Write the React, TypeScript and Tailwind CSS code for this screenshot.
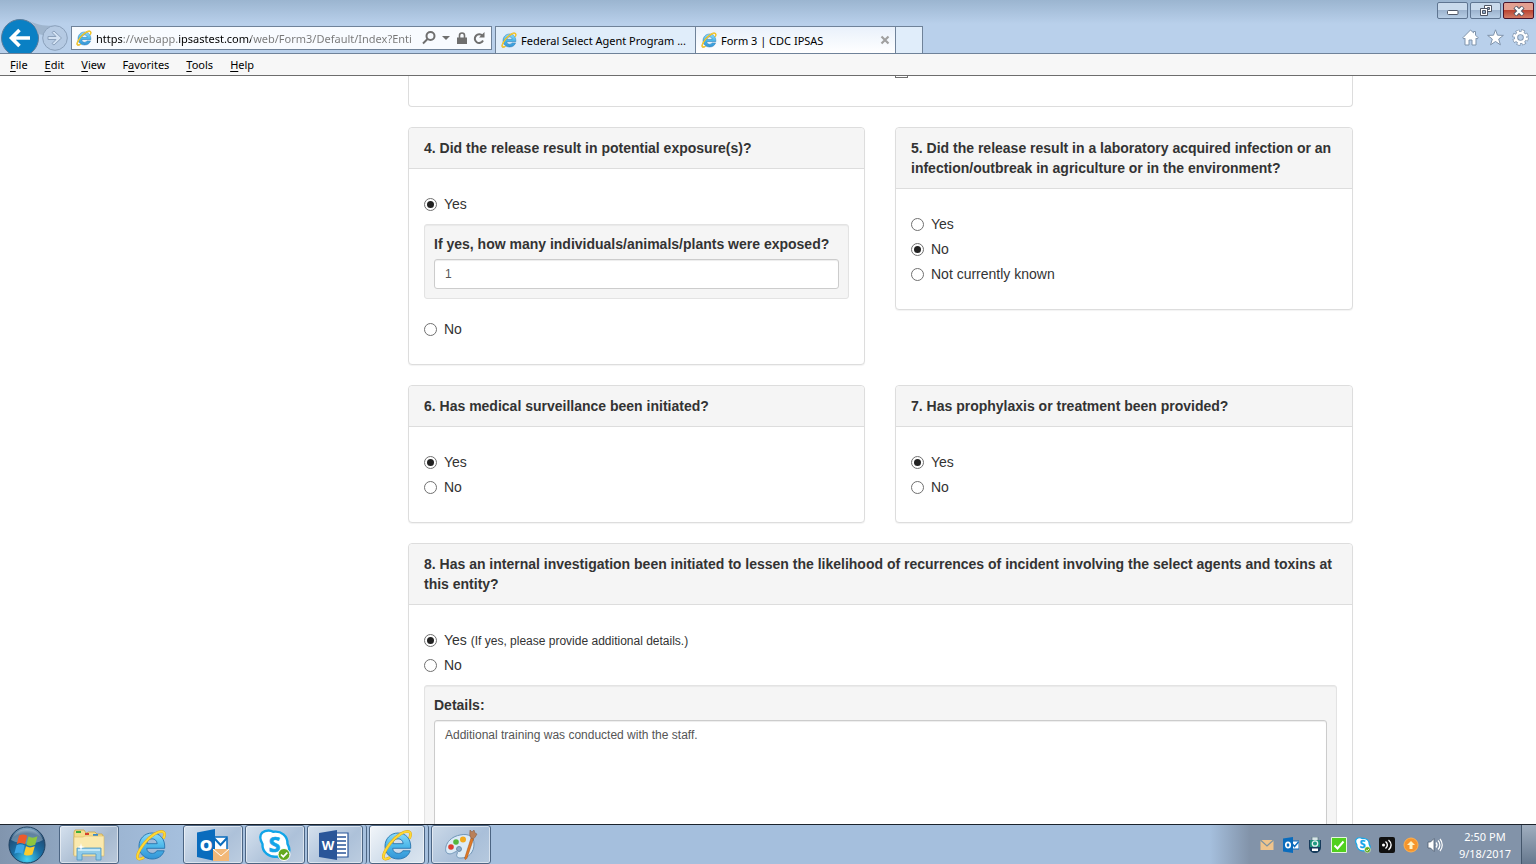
import React, { useId } from 'react';

interface IconProps {
  className?: string;
}

interface RadioProps {
  name: string;
  label: string;
  note?: string;
  checked?: boolean;
}

interface PanelProps {
  title: string;
  children: React.ReactNode;
}

const IeIcon: React.FC<IconProps> = ({ className }) => {
  const id = useId();
  return (
    <svg viewBox="0 0 32 32" className={className} fill="none" aria-hidden="true">
      <defs>
        <linearGradient id={id} x1="0" y1="0" x2="0" y2="1">
          <stop offset="0" stopColor="#8ddcf9" />
          <stop offset="0.5" stopColor="#4db8ea" />
          <stop offset="1" stopColor="#3494d6" />
        </linearGradient>
      </defs>
      <path d="M17 4C9.500 4 4 9.800 4 17.200 4 24.800 9.700 30 17.200 30c5.800 0 10.200-3 12-8.200h-7.400c-.9 1.700-2.400 2.600-4.500 2.600-3.300 0-5.400-2-5.600-5.100h18C30.300 10.300 25.200 4 17 4zm-5.200 10.700c.5-3 2.500-4.900 5.300-4.900s4.800 1.900 5.100 4.900z" fill={`url(#${id})`} stroke="#2673ad" strokeWidth="0.900" />
      <path d="M28.500 9.500c1.400-3.400 1.500-5.900-.4-6.700-4-1.700-12.900 3.900-18.900 11.500C3.200 22.200.9 28.300 3.300 29.800c1.200.7 3.300.1 5.700-1.300" stroke="#dba41c" strokeWidth="2.800" />
      <path d="M28.500 9.500c1.400-3.400 1.500-5.900-.4-6.700-4-1.700-12.900 3.900-18.900 11.500C3.200 22.200.9 28.300 3.300 29.800c1.200.7 3.300.1 5.700-1.300" stroke="#fdd835" strokeWidth="2" />
    </svg>
  );
};

const OutlookIcon: React.FC<IconProps> = ({ className }) => (
  <svg viewBox="0 0 32 32" className={className} aria-hidden="true">
    <path d="M16 8h14v13H16z" fill="#fff" stroke="#0a6cbd" strokeWidth="1.500" />
    <path d="M17 9l6.500 7L30 9" fill="none" stroke="#0a6cbd" strokeWidth="2" />
    <path d="M0 3.500L18 0v32L0 28z" fill="#0a6cbd" />
    <text x="9" y="21.500" textAnchor="middle" fontFamily="Open Sans, sans-serif" fontWeight="800" fontSize="16" fill="#fff">O</text>
  </svg>
);

const SkypeIcon: React.FC<IconProps> = ({ className }) => (
  <svg viewBox="0 0 32 32" className={`overflow-visible ${className}`} aria-hidden="true">
    <path d="M9.500 1.500c2 0 3.400.5 4.600 1.300 8-1.300 14.700 4 14.400 12 2.600 4.600 2.500 8.600-.3 11.500-2.700 2.800-6.800 3-9.900 1.300C9.700 28.800 3 22.900 3.500 15 .8 10.400.6 6.300 3.200 3.700c1.700-1.600 4-2.200 6.300-2.200z" fill="#fff" stroke="#12a5e8" strokeWidth="2.400" />
    <text x="15.500" y="22.500" textAnchor="middle" fontFamily="Open Sans, sans-serif" fontWeight="700" fontSize="21" fill="#12a5e8" stroke="#12a5e8" strokeWidth="0.700">S</text>
    <circle cx="25" cy="25.500" r="6" fill="#63a920" stroke="#fff" strokeWidth="1" />
    <path d="M22 25.500l2.300 2.200 4-4" fill="none" stroke="#fff" strokeWidth="1.700" />
  </svg>
);

const ExplorerIcon = () => (
  <svg viewBox="0 0 34 32" className="h-8 w-[34px]" aria-hidden="true">
    <path d="M2 3l1-2h9l2 3h1l1-1h7l2 2h5l1 2v19H2z" fill="#f5dc8c" stroke="#c9a54a" strokeWidth="0.800" />
    <path d="M4 2h5v2H4z" fill="#3fae3a" />
    <path d="M13 4h4v2h-4z" fill="#d8412c" />
    <path d="M21 5h5v2h-5z" fill="#3688cc" />
    <path d="M2 8h9l2-1h19v20H2z" fill="#fae9ae" stroke="#d9b963" strokeWidth="0.600" />
    <path d="M5 19h24v12h-5v-6H10v6H5z" fill="#8fcbe9" stroke="#4b94bf" strokeWidth="0.800" />
    <path d="M6 20h22v2H6z" fill="#c3e7f7" />
    <path d="M9 14l.8 3.200 3.200.8-3.200.8L9 22l-.8-3.200L5 18l3.200-.8z" fill="#fff" />
  </svg>
);

const WordIcon = () => (
  <svg viewBox="0 0 32 32" className="h-8 w-8" aria-hidden="true">
    <path d="M17 4h12v24H17z" fill="#fff" stroke="#2a5699" strokeWidth="1.200" />
    <path d="M18 8h9M18 12h9M18 16h9M18 20h9M18 24h9" stroke="#2a5699" strokeWidth="1.500" />
    <path d="M0 4l18-3v30L0 28z" fill="#2a5699" />
    <text x="9" y="21" textAnchor="middle" fontFamily="Open Sans, sans-serif" fontWeight="700" fontSize="13" fill="#fff">W</text>
  </svg>
);

const PaintIcon = () => (
  <svg viewBox="0 0 34 32" className="h-8 w-[34px]" aria-hidden="true">
    <path d="M16 6c9-2 14 2 14 9 0 8-5 14-13 14-4 0-5-2-4-4s0-3-2-2-5 3-8 1C0 22 1 9 16 6z" fill="#dcebf7" stroke="#7196b8" strokeWidth="1" />
    <circle cx="7" cy="18" r="2.800" fill="#dd3d30" />
    <circle cx="12" cy="13" r="2.800" fill="#55b73c" />
    <circle cx="19" cy="10.500" r="3" fill="#f1a91d" />
    <circle cx="15" cy="20" r="2.500" fill="#8dabc8" stroke="#5e7f9f" strokeWidth="0.800" />
    <path d="M27 9l2.500 1-6.500 19c-1 2-3 2-2-1z" fill="#e07a26" stroke="#a34e12" strokeWidth="0.500" />
    <path d="M27 9c-2-3-1-5-1-8l2 2 2-2 1 3 2 1c-1 2-3 5-4 5z" fill="#b9805a" stroke="#84563a" strokeWidth="0.500" />
  </svg>
);

const StartOrb = () => (
  <svg viewBox="0 0 40 38" className="h-[38px] w-10" aria-hidden="true">
    <defs>
      <radialGradient id="orb" cx="0.5" cy="0.9" r="0.9">
        <stop offset="0" stopColor="#45d3f2" />
        <stop offset="0.450" stopColor="#1a6fa5" />
        <stop offset="0.800" stopColor="#1f4b74" />
        <stop offset="1" stopColor="#8db3d0" />
      </radialGradient>
    </defs>
    <circle cx="20" cy="19" r="18" fill="url(#orb)" stroke="#1d3f5f" strokeWidth="1" />
    <path d="M4 14C7 6 14 3 20 3s13 3 16 11c-9 5-22 5-32 0z" fill="#fff" opacity="0.300" />
    <path d="M12 9.500c3-1.500 5.500-1.500 8.200.2l-2.200 8.500c-2.700-1.700-5.400-1.600-8.200-.3z" fill="#ec5b2c" />
    <path d="M21.500 10.500c2.800 1.600 5.600 1.500 9-.2l-2.300 8.500c-3 1.500-5.900 1.600-8.800 0z" fill="#8ec63f" />
    <path d="M9.500 19.300c3-1.400 5.500-1.300 8.200.3l-2.200 8.300c-2.700-1.700-5.200-1.600-8.200-.2z" fill="#3ca5e6" />
    <path d="M19 20.300c2.700 1.600 5.500 1.400 8.800 0l-2.400 8.200c-3 1.500-5.800 1.400-8.500-.1z" fill="#fccb2e" />
  </svg>
);

const Header = () => (
  <header className="flex h-[54px] shrink-0 border-b border-[#6f8299] bg-[linear-gradient(#9bb5d0,#b9d0eb_24px)]">
    <div className="flex items-end gap-[2px]">
      <button aria-label="Back">
        <svg viewBox="0 0 40 34" className="block h-[34px] w-10">
          <circle cx="20" cy="19" r="18.500" fill="#0a80c4" stroke="#5d7c9a" />
          <path d="M30 19H12M19.500 11l-8 8 8 8" fill="none" stroke="#fff" strokeWidth="3.600" />
        </svg>
      </button>
      <button aria-label="Forward">
        <svg viewBox="0 0 26 34" className="block h-[34px] w-[26px] overflow-visible" fill="none">
          <path d="M-12 2C-5 6 3 7 13 6.700 6 7 2 12 1 16l-5-1C-5 10-8 5-12 2z" fill="#9fb5cd" />
          <circle cx="13" cy="19" r="12.300" stroke="#8ba1bb" fill="#b5cae3" />
          <path d="M6 17.500h8l-4-4 2-1.500 7.500 7-7.500 7-2-1.500 4-4H6z" fill="#d3e2f3" stroke="#8ba1bb" />
        </svg>
      </button>
    </div>

    <div className="ml-[3px] mt-[26px] flex h-6 w-[421px] items-center border border-[#6f8299] bg-[#f8fbff] pl-1 pr-[6px]">
      <IeIcon className="size-4" />
      <input
        aria-label="Address"
        readOnly
        value="https://webapp.ipsastest.com/web/Form3/Default/Index?Enti"
        className="ml-1 min-w-0 flex-1 bg-[linear-gradient(90deg,#000_27px,#777_27px_83px,#000_83px_155px,#777_155px)] bg-clip-text pt-[2px] text-[11px] text-transparent outline-none"
      />
      <div className="flex items-center gap-[6px] text-[#6f6f6f]">
        <button aria-label="Search">
          <svg viewBox="0 0 14 14" className="size-[14px]" fill="none" stroke="currentColor" strokeWidth="2">
            <circle cx="8.500" cy="5" r="4" />
            <path d="M5.500 8L1 12.500" />
          </svg>
        </button>
        <button aria-label="Show address list">
          <svg viewBox="0 0 8 4" className="h-1 w-2" fill="currentColor"><path d="M0 0h8L4 4z" /></svg>
        </button>
        <svg viewBox="0 0 10 13" className="ml-px h-[13px] w-[10px]" aria-hidden="true">
          <path d="M0 5.500h10V12H0z" fill="currentColor" />
          <path d="M2.500 6V3.500a2.500 2.500 0 0 1 5 0V6" fill="none" stroke="currentColor" strokeWidth="1.600" />
        </svg>
        <button aria-label="Refresh">
          <svg viewBox="0 0 12 13" className="h-[13px] w-3" fill="none">
            <path d="M9.500 4A4.300 4.300 0 1 0 10 8.500" stroke="currentColor" strokeWidth="2" />
            <path d="M11.500 0v5.500H6z" fill="currentColor" />
          </svg>
        </button>
      </div>
    </div>

    <nav className="ml-[3px] mt-[26px] flex border-x border-t border-[#6f8299] text-[11px] text-black" aria-label="Tabs">
      <button className="flex w-[199px] items-center gap-1 bg-[#e0edfa] pl-[5px]">
        <IeIcon className="size-4 shrink-0" />
        <span className="whitespace-nowrap pt-[2px]">Federal Select Agent Program ...</span>
      </button>
      <div className="flex w-[201px] items-center gap-1 border-x border-[#6f8299] bg-[linear-gradient(#e9f1fb,#fff)] px-[5px]">
        <IeIcon className="size-4 shrink-0" />
        <span className="flex-1 pt-[2px]">Form 3 | CDC IPSAS</span>
        <button aria-label="Close tab">
          <svg viewBox="0 0 10 10" className="size-[10px]" stroke="#a0a0a0" strokeWidth="2.200"><path d="M1.500 1.500l7 7M8.500 1.500l-7 7" /></svg>
        </button>
      </div>
      <button aria-label="New tab" className="w-[26px] bg-[#e0edfa]" />
    </nav>

    <div className="ml-auto flex flex-col items-end justify-between pb-[7px] pt-[2px]">
      <div className="flex gap-[2px] pr-[2px]">
        <button aria-label="Minimize" className="flex h-[17px] w-[31px] items-center justify-center rounded-[2px] border border-[#5f7591] bg-[linear-gradient(#c9daec_50%,#9db4cf_50%,#b7cde5)]">
          <svg viewBox="0 0 12 6" className="mt-1 h-[6px] w-3"><rect x="0.500" y="0.500" width="10.500" height="4" rx="1" fill="#fff" stroke="#4f5666" /></svg>
        </button>
        <button aria-label="Restore" className="flex h-[17px] w-[31px] items-center justify-center rounded-[2px] border border-[#5f7591] bg-[linear-gradient(#c9daec_50%,#9db4cf_50%,#b7cde5)]">
          <svg viewBox="0 0 12 11" className="h-[11px] w-3" stroke="#4f5666">
            <path d="M4.500.5h7v6h-7z" fill="#fff" />
            <path d="M7.500 2.500h2v2h-2z" fill="#8fa8c3" />
            <path d="M.5 3.500h7v7h-7z" fill="#fff" />
            <path d="M2.500 5.500h3v3h-3z" fill="#8fa8c3" />
          </svg>
        </button>
        <button aria-label="Close" className="flex h-[17px] w-[31px] items-center justify-center rounded-[2px] border border-[#48142a] bg-[linear-gradient(#e3a091_50%,#bb4431_50%,#d27a65)]">
          <svg viewBox="0 0 12 10" className="h-[10px] w-3">
            <path d="M2 1l8 8M10 1L2 9" stroke="#4f5666" strokeWidth="4.400" />
            <path d="M2.400 1.400l7.200 7.200M9.600 1.400L2.400 8.600" stroke="#fff" strokeWidth="2.400" />
          </svg>
        </button>
      </div>
      <div className="flex gap-2 pr-[7px]">
        <button aria-label="Home">
          <svg viewBox="0 0 17 17" className="size-[17px]" fill="#fff" stroke="#7f93ab">
            <path d="M8.500 1L.8 8.800l1 1.200 1.200-.8V16h4v-5h3v5h4V9.200l1.200.8 1-1.200-2.700-2.700V2.500h-2v1.300z" />
          </svg>
        </button>
        <button aria-label="Favorites">
          <svg viewBox="0 0 17 17" className="size-[17px]" fill="#fff" stroke="#7f93ab">
            <path d="M8.500.8l2 5.400 5.900.2-4.700 3.600 1.700 5.800-4.900-3.300-4.900 3.300L5.300 10 .6 6.400l5.900-.2z" />
          </svg>
        </button>
        <button aria-label="Tools">
          <svg viewBox="0 0 17 17" className="size-[17px]" fill="none">
            <circle cx="8.500" cy="8.500" r="6" stroke="#7f93ab" strokeWidth="4.400" strokeDasharray="3.300 1.412" strokeDashoffset="0.200" />
            <circle cx="8.500" cy="8.500" r="4.400" stroke="#7f93ab" strokeWidth="4" />
            <circle cx="8.500" cy="8.500" r="6" stroke="#fff" strokeWidth="3" strokeDasharray="2.300 2.412" strokeDashoffset="-0.300" />
            <circle cx="8.500" cy="8.500" r="4.500" stroke="#fff" strokeWidth="2.400" />
          </svg>
        </button>
      </div>
    </div>
  </header>
);

const menus = [
  { before: '', key: 'F', after: 'ile' },
  { before: '', key: 'E', after: 'dit' },
  { before: '', key: 'V', after: 'iew' },
  { before: 'F', key: 'a', after: 'vorites' },
  { before: '', key: 'T', after: 'ools' },
  { before: '', key: 'H', after: 'elp' },
];

const MenuBar = () => (
  <nav className="flex h-[22px] shrink-0 items-center gap-[17px] border-b border-[#6d6d6d] bg-[#f7f7f7] pl-[10px] pt-[2px] text-[11px] text-black">
    {menus.map(m => (
      <button key={m.key}>{m.before}<span className="underline underline-offset-2">{m.key}</span>{m.after}</button>
    ))}
  </nav>
);

const Radio: React.FC<RadioProps> = ({ name, label, note, checked }) => (
  <label className="flex h-5 items-center gap-[7px]">
    <input
      type="radio"
      name={name}
      defaultChecked={checked}
      className="grid size-[13px] appearance-none place-content-center rounded-full border border-[#707070] bg-white before:size-[7px] before:rounded-full checked:before:bg-[#222]"
    />
    <span>{label}{note && <> <span className="text-xs">{note}</span></>}</span>
  </label>
);

const Panel: React.FC<PanelProps> = ({ title, children }) => (
  <section className="rounded border border-[#ddd] bg-white shadow-[0_1px_1px_rgba(0,0,0,0.05)]">
    <h3 className="rounded-t border-b border-[#ddd] bg-[#f5f5f5] px-[15px] py-[10px] font-bold">{title}</h3>
    <div className="px-[15px] py-[25px]">{children}</div>
  </section>
);

const Form = () => (
  <main className="min-h-0 flex-1 overflow-hidden bg-white font-['Liberation_Sans',Arial,sans-serif] text-sm leading-5 text-[#333]">
    <div className="mx-auto max-w-[1170px] pl-[225px]">
      <div className="mb-5 grid h-[31px] grid-cols-[456fr_457fr] gap-[30px] overflow-hidden rounded-b border-x border-b border-[#ddd]">
        <input type="checkbox" aria-label="Other" className="col-start-2 -mt-[11px] size-[13px] appearance-none border border-[#707070]" />
      </div>

      <div className="mb-5 grid grid-cols-[457fr_458fr] items-start gap-x-[30px] gap-y-5">
        <Panel title="4. Did the release result in potential exposure(s)?">
          <Radio name="exposure" label="Yes" checked />
          <div className="mb-5 mt-[10px] rounded-[3px] border border-[#e3e3e3] bg-[#f5f5f5] p-[9px] shadow-[inset_0_1px_1px_rgba(0,0,0,0.05)]">
            <label htmlFor="exposed" className="mb-[5px] block font-bold">If yes, how many individuals/animals/plants were exposed?</label>
            <input id="exposed" defaultValue="1" className="block h-[30px] w-full rounded-[3px] border border-[#ccc] bg-white px-[10px] text-xs text-[#555] shadow-[inset_0_1px_1px_rgba(0,0,0,0.075)]" />
          </div>
          <Radio name="exposure" label="No" />
        </Panel>
        <Panel title="5. Did the release result in a laboratory acquired infection or an infection/outbreak in agriculture or in the environment?">
          <div className="flex flex-col gap-[5px]">
            <Radio name="infection" label="Yes" />
            <Radio name="infection" label="No" checked />
            <Radio name="infection" label="Not currently known" />
          </div>
        </Panel>
        <Panel title="6. Has medical surveillance been initiated?">
          <div className="flex flex-col gap-[5px]">
            <Radio name="surveillance" label="Yes" checked />
            <Radio name="surveillance" label="No" />
          </div>
        </Panel>
        <Panel title="7. Has prophylaxis or treatment been provided?">
          <div className="flex flex-col gap-[5px]">
            <Radio name="treatment" label="Yes" checked />
            <Radio name="treatment" label="No" />
          </div>
        </Panel>
      </div>

      <Panel title="8. Has an internal investigation been initiated to lessen the likelihood of recurrences of incident involving the select agents and toxins at this entity?">
        <div className="flex flex-col gap-[5px]">
          <Radio name="investigation" label="Yes" note="(If yes, please provide additional details.)" checked />
          <Radio name="investigation" label="No" />
        </div>
        <div className="mt-[10px] rounded-[3px] border border-[#e3e3e3] bg-[#f5f5f5] p-[9px] shadow-[inset_0_1px_1px_rgba(0,0,0,0.05)]">
          <label htmlFor="details" className="mb-[5px] block font-bold">Details:</label>
          <textarea
            id="details"
            rows={8}
            defaultValue="Additional training was conducted with the staff."
            className="block w-full resize-none rounded-[3px] border border-[#ccc] bg-white px-[10px] py-[5px] text-xs leading-[18px] text-[#555] shadow-[inset_0_1px_1px_rgba(0,0,0,0.075)]"
          />
        </div>
      </Panel>
    </div>
  </main>
);

const taskButton = 'flex h-[39px] items-center justify-center rounded-[3px] border border-[#4c6583] shadow-[inset_0_0_0_1px_rgba(255,255,255,0.5)]';

const Taskbar = () => (
  <footer className="flex h-10 shrink-0 justify-between border-t border-[#1c232c] bg-[linear-gradient(90deg,#8195ae,#9db6d3_120px,#a5bfdd_180px,#a5bfdd_1210px,#8293a9_1250px)]">
    <div className="flex">
      <button aria-label="Start" className="mr-[6px] flex w-[53px] items-center justify-center"><StartOrb /></button>
      <div className="flex gap-[2px]">
        <button aria-label="File Explorer" className={`${taskButton} w-15 bg-[linear-gradient(135deg,#d5e1ee,#a6b9cf_60%,#b9c9db)]`}><ExplorerIcon /></button>
        <button aria-label="Internet Explorer" className="flex w-15 items-center justify-center"><IeIcon className="size-8" /></button>
        <button aria-label="Outlook" className={`${taskButton} w-15 bg-[linear-gradient(135deg,#d5e1ee,#adc1d9_60%,#bccde0)]`}>
          <span className="relative">
            <OutlookIcon className="size-8" />
            <svg viewBox="0 0 16 12" className="absolute bottom-0 right-0 h-3 w-4" aria-hidden="true">
              <path d="M0 0h16v12H0z" fill="#f2b878" />
              <path d="M0 0l8 7 8-7" fill="none" stroke="#fff" />
            </svg>
          </span>
        </button>
        <button aria-label="Skype" className={`${taskButton} w-15 bg-[linear-gradient(135deg,#d5e1ee,#adc1d9_60%,#bccde0)]`}><SkypeIcon className="size-8" /></button>
        <div className="flex w-15 rounded-[3px] border-r border-[#4c6583] pr-[3px]">
          <button aria-label="Word" className={`${taskButton} flex-1 bg-[linear-gradient(135deg,#d5e1ee,#adc1d9_60%,#bccde0)]`}><WordIcon /></button>
        </div>
        <div className="flex w-15 rounded-[3px] border-r border-[#4c6583] pr-[3px]">
          <button aria-label="Internet Explorer windows" className={`${taskButton} flex-1 bg-[linear-gradient(135deg,#f2f6fa,#ccdae9_60%,#dce6f0)]`}><IeIcon className="size-8" /></button>
        </div>
        <button aria-label="Paint" className={`${taskButton} w-15 bg-[linear-gradient(135deg,#cbd9e8,#a9bfd9_60%,#b6c9de)]`}><PaintIcon /></button>
      </div>
    </div>

    <div className="flex items-center">
      <div className="flex items-center gap-2">
        <svg viewBox="0 0 16 16" className="size-4" aria-hidden="true">
          <path d="M1.500 3h13v10h-13z" fill="#efc48c" />
          <path d="M1.500 3l6.500 6 6.500-6" fill="none" stroke="#7d93a0" strokeWidth="1.200" />
        </svg>
        <svg viewBox="0 0 16 16" className="size-4" aria-hidden="true">
          <path d="M8 4h8v8H8z" fill="#fff" stroke="#0a6cbd" />
          <path d="M9.500 7l2 2.500 4-4.500" fill="none" stroke="#0a6cbd" strokeWidth="1.500" />
          <path d="M0 1.500L10 0v16L0 14.500z" fill="#0a6cbd" />
          <ellipse cx="5" cy="8" rx="2.200" ry="2.700" fill="none" stroke="#fff" strokeWidth="1.700" />
        </svg>
        <svg viewBox="0 0 16 16" className="size-4" aria-hidden="true">
          <path d="M2 3h12v7c0 4-3 6-6 6s-6-2-6-6z" fill="#173c5c" />
          <path d="M5 0h6v4H5z" fill="#d8e5e7" stroke="#4e6b77" strokeWidth="0.600" />
          <path d="M3 3h10v7H3z" fill="#1d8f79" />
          <circle cx="8" cy="6.500" r="2.700" fill="#1d9b81" stroke="#e2f3f1" strokeWidth="1.300" />
          <path d="M5 11.500h6V14H5z" fill="#fff" />
        </svg>
        <svg viewBox="0 0 16 16" className="size-4" aria-hidden="true">
          <path d="M.5.5h15v15H.5z" fill="#50d01e" stroke="#e6f7df" />
          <path d="M3.500 8.500l3 3 6-7" fill="none" stroke="#fff" strokeWidth="2" />
        </svg>
        <SkypeIcon className="size-4" />
        <svg viewBox="0 0 16 16" className="size-4" fill="none" aria-hidden="true">
          <rect width="16" height="16" rx="2" fill="#111" />
          <circle cx="4.500" cy="8" r="1.500" fill="#fff" />
          <path d="M6.500 4.500c2.500 2 2.500 5 0 7M9.500 3c3.500 3 3.500 7 0 10" stroke="#fff" strokeWidth="1.400" />
        </svg>
        <svg viewBox="0 0 16 16" className="size-4" aria-hidden="true">
          <circle cx="8" cy="8" r="7" fill="#f6952c" stroke="#ffb14f" />
          <path d="M8 4l4 4H9.500v4h-3V8H4z" fill="#fff3c4" />
        </svg>
        <svg viewBox="0 0 16 16" className="size-4" fill="none" aria-hidden="true">
          <path d="M1 5h2.500L7 1.500v13L3.500 11H1z" fill="#fff" stroke="#4b5c70" strokeWidth="0.800" />
          <path d="M9 5.500c1.300 1.500 1.300 3.500 0 5M11 3.500c2.500 2.500 2.500 6.500 0 9M13 2c3 3.500 3 8.500 0 12" stroke="#fff" strokeWidth="1.200" />
        </svg>
      </div>
      <time className="w-[78px] pl-[6px] text-center text-[11px] leading-[17px] text-white">2:50 PM<br />9/18/2017</time>
      <button aria-label="Show desktop" className="h-full w-[15px] border-l border-[#44566b] bg-[linear-gradient(#a0aebf,#66788e)]" />
    </div>
  </footer>
);

export default function App() {
  return (
    <div className="flex h-screen flex-col overflow-hidden font-['Noto_Sans','Segoe_UI',sans-serif]">
      <Header />
      <MenuBar />
      <Form />
      <Taskbar />
    </div>
  );
}
